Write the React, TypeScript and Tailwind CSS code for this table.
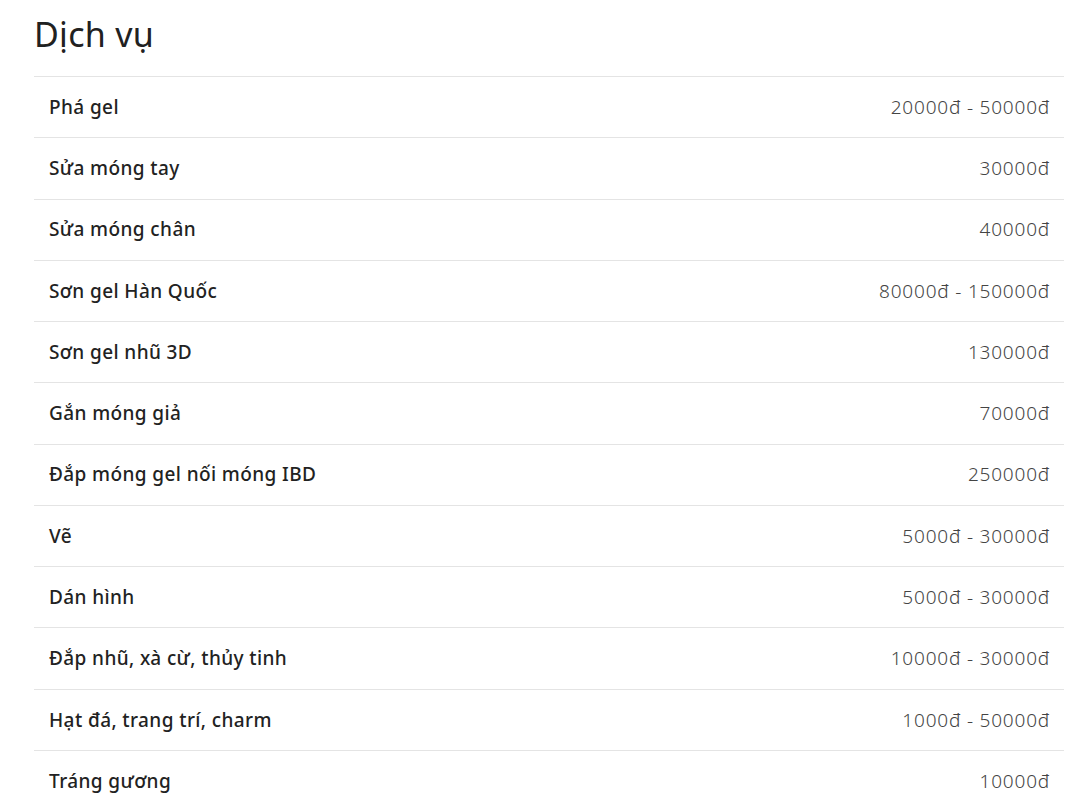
const services: { name: string; price: string }[] = [
  { name: "Phá gel", price: "20000đ - 50000đ" },
  { name: "Sửa móng tay", price: "30000đ" },
  { name: "Sửa móng chân", price: "40000đ" },
  { name: "Sơn gel Hàn Quốc", price: "80000đ - 150000đ" },
  { name: "Sơn gel nhũ 3D", price: "130000đ" },
  { name: "Gắn móng giả", price: "70000đ" },
  { name: "Đắp móng gel nối móng IBD", price: "250000đ" },
  { name: "Vẽ", price: "5000đ - 30000đ" },
  { name: "Dán hình", price: "5000đ - 30000đ" },
  { name: "Đắp nhũ, xà cừ, thủy tinh", price: "10000đ - 30000đ" },
  { name: "Hạt đá, trang trí, charm", price: "1000đ - 50000đ" },
  { name: "Tráng gương", price: "10000đ" },
];

export default function App() {
  return (
    <div className="min-h-[811px] bg-white px-[34px] pt-[12px] font-['Noto_Sans',sans-serif] text-[#212121]">
      <h1 className="mb-[20px] text-[34px] leading-[44px] font-normal tracking-[0.3px]">Dịch vụ</h1>
      <div className="w-[1030px]">
        {services.map((s) => (
          <div
            key={s.name}
            className="flex h-[61.27px] items-center justify-between border-t border-[#e4e4e4] pr-[14px] pl-[15px]"
          >
            <span className="text-[19px] font-medium tracking-[0.4px] text-[#222]">{s.name}</span>
            <span className="text-[19px] font-light tracking-[0.8px] text-[#444]">{s.price}</span>
          </div>
        ))}
      </div>
    </div>
  );
}
